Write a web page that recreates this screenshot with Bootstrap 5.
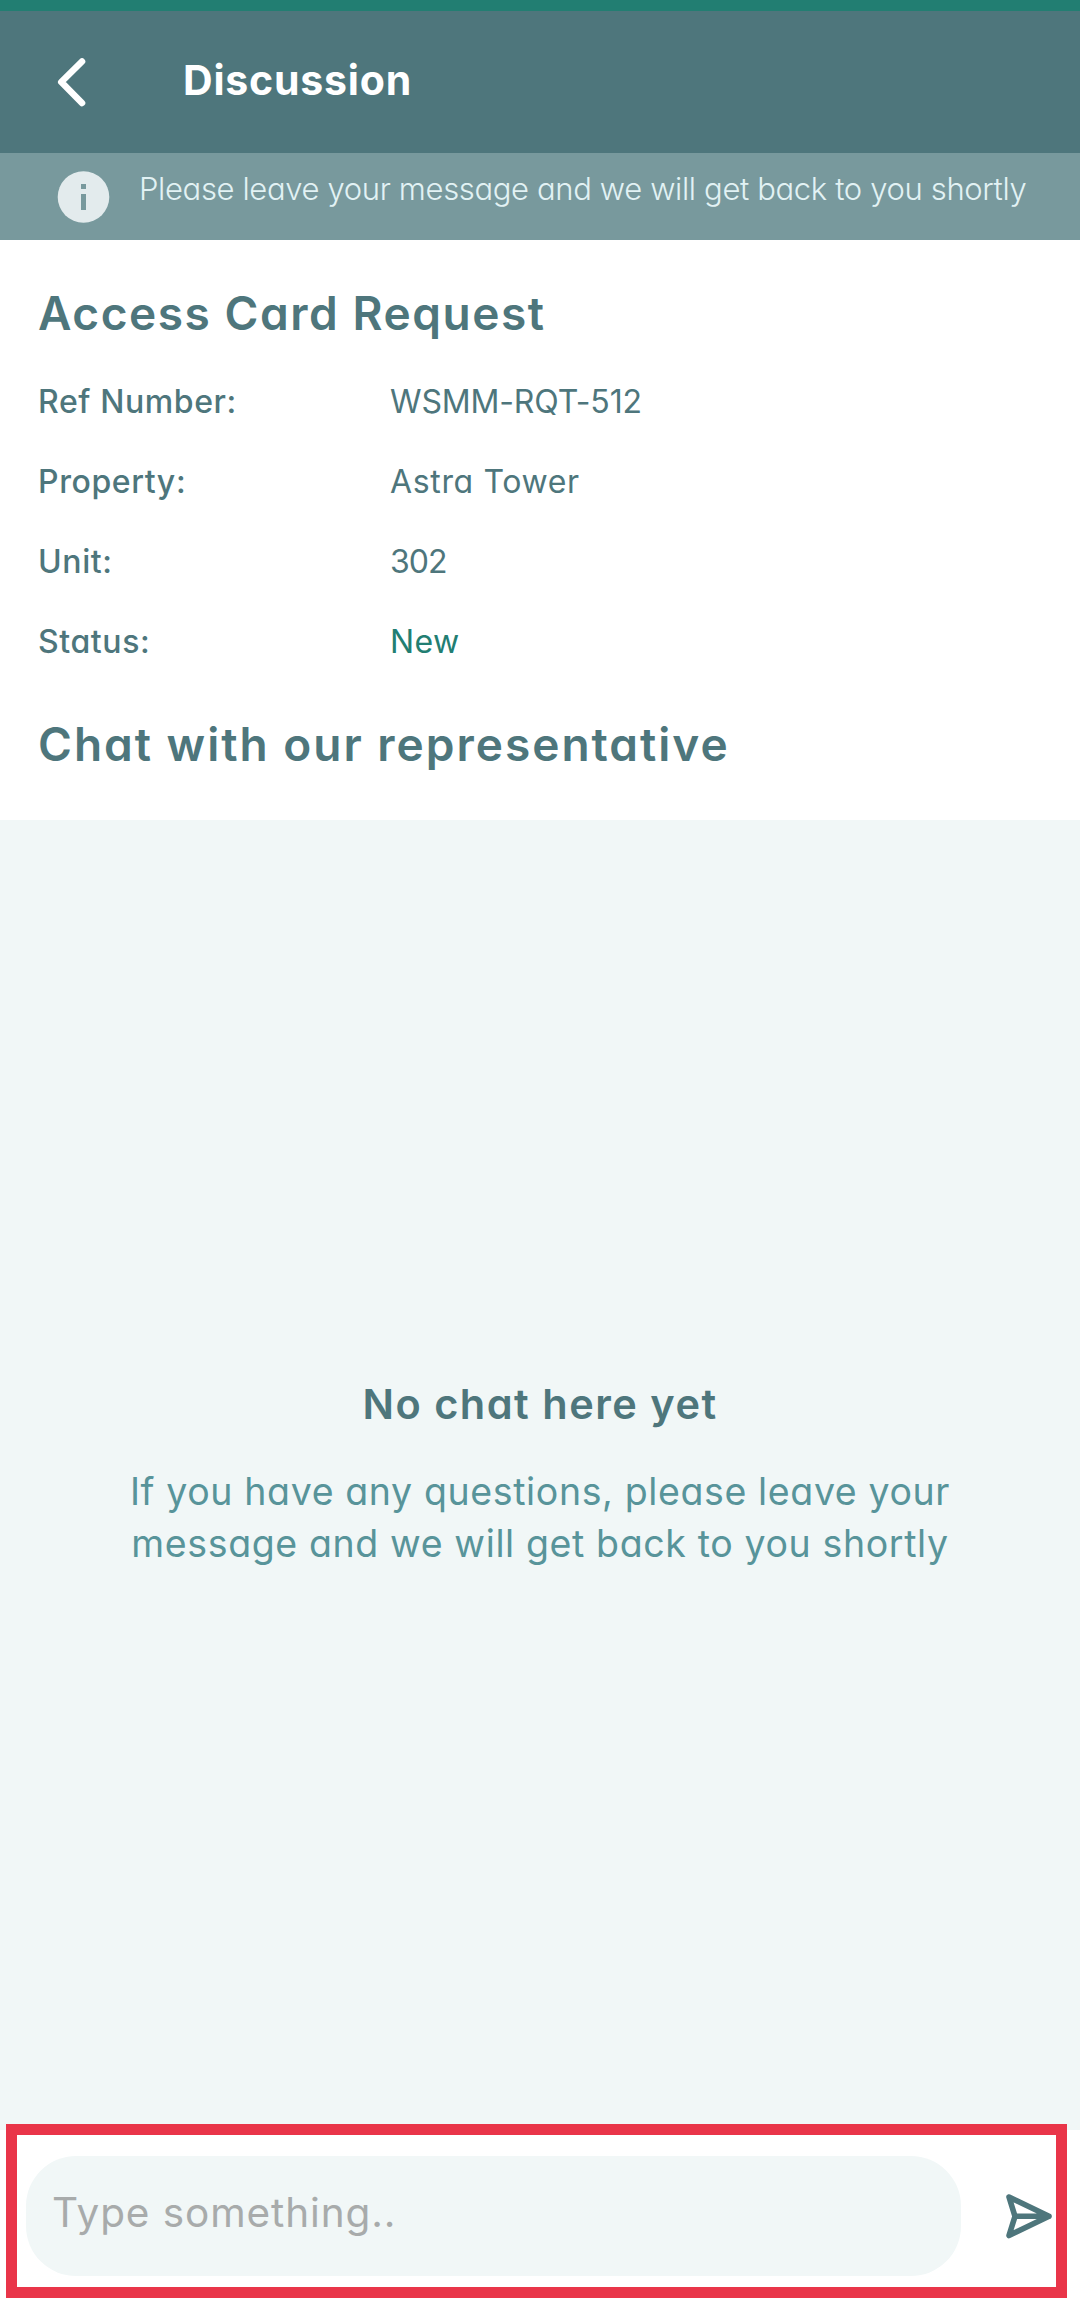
<!DOCTYPE html>
<html lang="en">
<head>
<meta charset="utf-8">
<meta name="viewport" content="width=device-width, initial-scale=1">
<title>Discussion</title>
<link href="https://cdn.jsdelivr.net/npm/bootstrap@5.3.0/dist/css/bootstrap.min.css" rel="stylesheet">
<style>
:root{--slate:#4e767c;--mist:#f1f7f7}
body{font-family:Inter,"Open Sans",sans-serif;font-feature-settings:"cv11";color:var(--slate);background:#fff;height:2302px;overflow:hidden}
svg{display:block;flex:none}
.topbar{height:153px;border-top:11px solid #227e72;background:var(--slate);padding:43px 56px 0;color:#fff}
.back-btn{width:36px;height:54px;margin-right:91px}
.topbar h1{font-size:41px;line-height:52px;font-weight:650;letter-spacing:.8px}
.notice{height:87px;background:#78999d;padding:16px 0 0 57px;color:#e2f2f4}
.notice p{font-size:31px;font-weight:300;line-height:40px;letter-spacing:-.36px;margin-left:29px}
.details{height:580px;padding:43px 38px 0}
.details h2{line-height:60px;font-weight:600}
.request-title{font-size:46px;letter-spacing:1.55px}
.chat-title{font-size:46px;letter-spacing:2px;margin-top:32px}
.facts{margin-top:19px;font-size:32px;line-height:80px}
.facts dt{width:352px;font-weight:500;letter-spacing:.6px}
.facts dd{letter-spacing:.4px}
.facts .fact-code{letter-spacing:-.15px}
.facts .fact-unit{letter-spacing:-1px}
.facts .fact-tower{letter-spacing:.65px}
.fact-new{color:#227e72}
.chat-area{height:1310px;background:var(--mist);padding-top:554px}
.chat-area h3{font-size:41.5px;line-height:60px;font-weight:600;letter-spacing:1.5px;margin-bottom:32px}
.chat-area p{font-size:37.5px;line-height:52px;letter-spacing:.62px;color:#58949a}
.composer{height:172px;padding:26px 26px 26px}
.composer .form-control{width:935px;height:120px;border-radius:50px;background:var(--mist);font-size:40.5px;letter-spacing:.9px;padding:0 26px 8px}
.composer .form-control::placeholder{color:#a8abab;opacity:1}
.send-btn{margin-left:43px}
.callout-frame{left:6px;top:-6px;width:1061px;height:174px;border:11px solid #e93549;pointer-events:none}
</style>
<script src="https://cdn.jsdelivr.net/npm/bootstrap@5.3.0/dist/js/bootstrap.bundle.min.js"></script>
</head>
<body>
<header class="topbar d-flex align-items-start">
  <button class="btn border-0 p-0 back-btn" aria-label="Back">
    <svg width="36" height="54" viewBox="0 0 36 54" fill="none" stroke="#fff" stroke-width="6.6" stroke-linecap="round" stroke-linejoin="round"><path d="M26 7.5 5.300 28 26 49"/></svg>
  </button>
  <h1 class="m-0">Discussion</h1>
</header>
<div class="notice d-flex align-items-start">
  <svg width="53" height="56" viewBox="0 0 53 56"><circle cx="26.5" cy="28" r="25.8" fill="#e3ebed"/><path fill="#78999d" d="M24 15h5v5h-5zM24 25h5v16h-5z"/></svg>
  <p class="mb-0 text-nowrap">Please leave your message and we will get back to you shortly</p>
</div>
<section class="details">
  <h2 class="request-title m-0">Access Card Request</h2>
  <dl class="facts mb-0">
    <div class="d-flex"><dt>Ref Number:</dt><dd class="m-0 fact-code">WSMM-RQT-512</dd></div>
    <div class="d-flex"><dt>Property:</dt><dd class="m-0 fact-tower">Astra Tower</dd></div>
    <div class="d-flex"><dt>Unit:</dt><dd class="m-0 fact-unit">302</dd></div>
    <div class="d-flex"><dt>Status:</dt><dd class="m-0 fact-new">New</dd></div>
  </dl>
  <h2 class="chat-title mb-0">Chat with our representative</h2>
</section>
<main class="chat-area text-center">
  <h3>No chat here yet</h3>
  <p class="m-0">If you have any questions, please leave your<br>message and we will get back to you shortly</p>
</main>
<footer class="composer d-flex align-items-center position-relative">
  <input class="form-control border-0 flex-shrink-0" type="text" placeholder="Type something.." aria-label="Message">
  <button class="btn border-0 p-0 send-btn" aria-label="Send">
    <svg width="50" height="50" viewBox="0 0 50 50" fill="none" stroke="#4e767c" stroke-width="5.600" stroke-linecap="round" stroke-linejoin="round"><path d="M5 6 45 25.300 5 44.500 11 25.300zM11 25.300h34"/></svg>
  </button>
  <div class="callout-frame position-absolute"></div>
</footer>
</body>
</html>
